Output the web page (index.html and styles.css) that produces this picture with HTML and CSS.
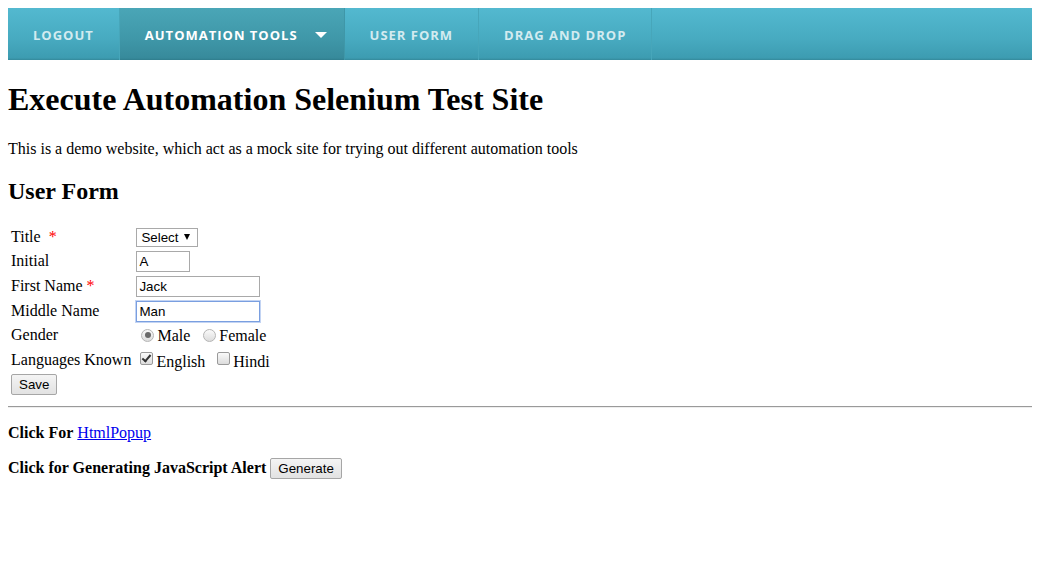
FILE: index.html
```html
<!DOCTYPE html>
<html>
<head>
<meta charset="utf-8">
<title>Execute Automation</title>
<link rel="stylesheet" href="styles.css">
</head>
<body>
<nav class="nav">
  <a class="nav-item">LOGOUT</a>
  <a class="nav-item active">AUTOMATION TOOLS<span class="caret"></span></a>
  <a class="nav-item">USER FORM</a>
  <a class="nav-item">DRAG AND DROP</a>
</nav>

<h1 class="title">Execute Automation Selenium Test Site</h1>
<p class="intro">This is a demo website, which act as a mock site for trying out different automation tools</p>
<h2 class="subtitle">User Form</h2>

<form class="user-form">
  <table class="form-table">
    <tr>
      <td class="label">Title&nbsp; <span class="req">*</span></td>
      <td><span class="select-wrap"><select class="select"><option>Select</option></select></span></td>
    </tr>
    <tr>
      <td class="label">Initial</td>
      <td><input class="text-input small" type="text" value="A"></td>
    </tr>
    <tr>
      <td class="label">First Name <span class="req">*</span></td>
      <td><input class="text-input" type="text" value="Jack"></td>
    </tr>
    <tr>
      <td class="label">Middle Name</td>
      <td><input class="text-input focused" type="text" value="Man"></td>
    </tr>
    <tr>
      <td class="label">Gender</td>
      <td><input class="radio" type="radio" name="g" checked>Male&nbsp; <input class="radio" type="radio" name="g">Female</td>
    </tr>
    <tr>
      <td class="label">Languages Known</td>
      <td><input class="check" type="checkbox" checked>English&nbsp; <input class="check" type="checkbox">Hindi</td>
    </tr>
    <tr>
      <td class="label"><button type="button" class="btn save">Save</button></td>
      <td></td>
    </tr>
  </table>
</form>

<hr class="rule">

<p class="line"><b>Click For</b> <a href="#" class="link">HtmlPopup </a></p>
<p class="line"><b>Click for Generating JavaScript Alert</b> <button type="button" class="btn">Generate</button></p>
</body>
</html>
```

FILE: styles.css
```css
html, body {
  background: #fff;
}
body {
  margin: 8px;
  font-family: "Liberation Serif", "Times New Roman", serif;
  font-size: 16px;
  color: #000;
}

.nav {
  display: flex;
  height: 52px;
  background: linear-gradient(to bottom, #53b9d0 0%, #47aac0 60%, #3d9cb1 96%, #34899b 100%);
}
.nav-item {
  display: flex;
  align-items: center;
  padding: 1px 25px 0 25px;
  font-family: "Open Sans", sans-serif;
  font-weight: 700;
  font-size: 13px;
  letter-spacing: 1px;
  color: #d3ebf0;
  border-right: 1px solid #47a6ba;
}
.nav-item.active {
  color: #fff;
  background: linear-gradient(to bottom, #4aa6b7 0%, #3f97a8 60%, #378a9b 96%, #2f7d8d 100%);
  padding-right: 17px;
  border-right-color: #3f97a8;
}
.caret {
  display: inline-block;
  width: 0;
  height: 0;
  margin-left: 17px;
  border-left: 6px solid transparent;
  border-right: 6px solid transparent;
  border-top: 6px solid #fff;
}

.title {
  font-size: 32px;
  margin: 0.67em 0;
}
.intro {
  margin: 16px 0;
}
.subtitle {
  font-size: 24px;
  margin: 20px 0 19px;
}

.user-form {
  margin: 0;
}
.form-table {
  border-spacing: 2px;
}
.form-table td {
  padding: 1px;
  white-space: nowrap;
}
.form-table td.label {
  padding-right: 2px;
}
.req {
  color: red;
}

.select-wrap {
  position: relative;
  display: inline-block;
}
.select {
  -webkit-appearance: none;
  appearance: none;
  font-family: "Liberation Sans", Arial, sans-serif;
  font-size: 13.33px;
  color: #000;
  background: #fff;
  border: 1px solid #a9a9a9;
  border-radius: 0;
  height: 19px;
  width: 62px;
  padding: 0 0 0 4px;
  margin: 0;
  vertical-align: middle;
}
.select-wrap::after {
  content: "";
  position: absolute;
  right: 8px;
  top: 7px;
  border-left: 3.5px solid transparent;
  border-right: 3.5px solid transparent;
  border-top: 6px solid #000;
  pointer-events: none;
}

.text-input {
  font-family: "Liberation Sans", Arial, sans-serif;
  font-size: 13.33px;
  color: #000;
  border: 1px solid #a9a9a9;
  border-radius: 0;
  height: 21px;
  box-sizing: border-box;
  width: 124px;
  padding: 1px 2px;
  margin: 0;
  outline: none;
  vertical-align: middle;
}
.text-input.small {
  width: 54px;
}
.text-input.focused {
  border: 1px solid #7a9fe0;
  box-shadow: 0 0 0 1px #c3d4f3;
}

.radio, .check {
  -webkit-appearance: none;
  appearance: none;
  width: 13px;
  height: 13px;
  box-sizing: border-box;
  border: 1px solid #b5b5b5;
  background: linear-gradient(to bottom, #fafafa, #dcdcdc);
  vertical-align: -1px;
  position: relative;
}
.radio {
  border-radius: 50%;
  margin: 3px 3px 0 5px;
}
.radio:checked::after {
  content: "";
  position: absolute;
  left: 2.5px;
  top: 2.5px;
  width: 6px;
  height: 6px;
  border-radius: 50%;
  background: #6a6a6a;
}
.check {
  border-radius: 2px;
  margin: 3px 3px 3px 4px;
  border-color: #9a9a9a;
}
.check:checked::after {
  content: "";
  position: absolute;
  left: 3px;
  top: 0px;
  width: 3px;
  height: 7px;
  border: solid #333;
  border-width: 0 2px 2px 0;
  transform: rotate(40deg);
}

.btn {
  font-family: "Liberation Sans", Arial, sans-serif;
  font-size: 13.33px;
  color: #000;
  background: linear-gradient(to bottom, #f4f4f4, #e2e2e2);
  border: 1px solid #a6a6a6;
  border-radius: 2px;
  padding: 1px 7px;
  height: 21px;
  margin: 0;
}
.btn.save {
  margin-top: -1px;
}

.rule {
  margin: 8px 0;
  border: 0;
  border-top: 1px solid #9a9a9a;
  border-bottom: 1px solid #eeeeee;
}
.line {
  margin: 16px 0;
}
.link {
  color: #0000ee;
}
```
